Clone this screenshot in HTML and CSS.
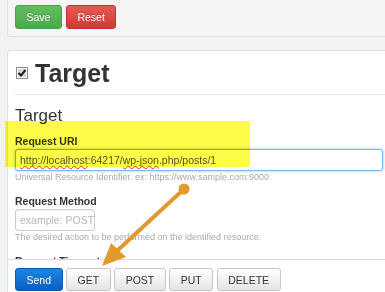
FILE: index.html
```html
<!DOCTYPE html>
<html lang="en">
<head>
  <meta charset="UTF-8" />
  <title>Target</title>
  <link rel="stylesheet" href="styles.css">
</head>
<body>
  <div class="toolbar">
    <button class="btn btn-save">Save</button>
    <button class="btn btn-reset">Reset</button>
  </div>

  <div class="panel">
    <div class="panel-body">
      <h1 class="title">
        <svg class="title-icon" width="12" height="12" viewBox="0 0 12 12">
          <rect x="0.5" y="0.5" width="11" height="11" fill="#fff" stroke="#8a8a8a"/>
          <rect x="2" y="2" width="8" height="8" fill="#d6d6d6"/>
          <path d="M2.5 6 L5 8.5 L9.5 3" fill="none" stroke="#1e1e1e" stroke-width="2"/>
        </svg>Target
      </h1>
      <h2 class="section">Target</h2>

      <div class="field">
        <label>Request URI</label>
        <div class="input input-uri"><span class="typo">http://localhost</span>:64217/<span class="typo">wp-json</span>.php/posts/1</div>
        <p class="help">Universal Resource Identifier. ex: https://www.sample.com:9000</p>
      </div>

      <div class="field">
        <label>Request Method</label>
        <div class="input input-method">example: POST</div>
        <p class="help">The desired action to be performed on the identified resource.</p>
      </div>

      <div class="field">
        <label>Request Timeout</label>
      </div>
    </div>

    <div class="footer">
      <button class="btn btn-send">Send</button>
      <button class="btn btn-default">GET</button>
      <button class="btn btn-default">POST</button>
      <button class="btn btn-default">PUT</button>
      <button class="btn btn-default">DELETE</button>
    </div>
  </div>

  <div class="marker"></div>
  <svg class="arrow" width="385" height="292" viewBox="0 0 385 292">
    <line x1="184" y1="189" x2="118" y2="250" stroke="#e29a2c" stroke-width="4" stroke-linecap="round"/>
    <circle cx="184" cy="189" r="5.5" fill="#e29a2c"/>
    <polygon points="102,266 126,257 111,243" fill="#e29a2c"/>
  </svg>
</body>
</html>
```

FILE: styles.css
```css
* {
  box-sizing: border-box;
}

body {
  margin: 0;
  height: 292px;
  overflow: hidden;
  position: relative;
  background: #f1f2f2;
  font-family: "Liberation Sans", Arial, sans-serif;
  color: #333;
}

.toolbar {
  height: 37px;
  margin-left: 7px;
  padding: 5px 7px;
  display: flex;
  gap: 4px;
  background: #f5f5f5;
  border-left: 1px solid #e3e3e3;
  border-bottom: 1px solid #e1e1e1;
  border-radius: 0 0 0 4px;
}

.btn {
  height: 24px;
  padding: 0 10.5px;
  font-family: "Liberation Sans", Arial, sans-serif;
  font-size: 10.5px;
  border: 1px solid;
  border-radius: 3px;
  cursor: pointer;
}

.btn-save {
  color: #fff;
  background: linear-gradient(#62bd62, #4ca94c);
  border-color: #46a346;
  text-shadow: 0 -1px 0 rgba(0,0,0,0.2);
}

.btn-reset {
  color: #fff;
  background: linear-gradient(#e55b57, #cc3a36);
  border-color: #c2332f;
  text-shadow: 0 -1px 0 rgba(0,0,0,0.2);
}

.panel {
  margin: 13px 0 0 7px;
  background: #fff;
  border: 1px solid #e3e3e3;
  border-right: 0;
  border-radius: 4px 0 0 0;
}

.panel-body {
  height: 208px;
  overflow: hidden;
  padding: 7px 0 0 7px;
}

.title {
  margin: 0;
  padding-bottom: 6px;
  font-size: 25px;
  line-height: 30px;
  font-weight: bold;
  border-bottom: 1px solid #e6e6e6;
}

.title-icon {
  vertical-align: 3px;
  margin: 0 7px 0 1px;
}

.section {
  margin: 11px 0 7.5px;
  font-size: 17px;
  line-height: 20px;
  font-weight: normal;
}

.field {
  margin-bottom: 10.5px;
}

.field label {
  display: block;
  margin-bottom: 1.5px;
  font-size: 10.5px;
  line-height: 14px;
  font-weight: bold;
}

.input {
  height: 22px;
  padding: 0 4px;
  font-size: 10.5px;
  line-height: 20px;
  color: #555;
  background: #fff;
  border: 1px solid #ccc;
  border-radius: 3px;
  white-space: nowrap;
  overflow: hidden;
}

.input-uri {
  width: 368px;
  border-color: #7db9ec;
  box-shadow: 0 0 3px rgba(102,175,233,0.75);
}

.input-method {
  width: 80px;
  color: #b8b8b8;
  box-shadow: inset 0 1px 1px rgba(0,0,0,0.07);
}

.typo {
  text-decoration: underline wavy #e0332f;
  text-decoration-thickness: 1px;
  text-decoration-skip-ink: none;
}

.help {
  margin: 0;
  font-size: 9px;
  line-height: 12px;
  color: #aaa;
}

.footer {
  display: flex;
  gap: 3.5px;
  padding: 8px 7px;
  border-top: 1px solid #dcdcdc;
}

.footer .btn {
  height: 23px;
}

.btn-send {
  color: #fff;
  background: linear-gradient(#1a86e2, #0a5ec4);
  border-color: #0a58b5;
}

.btn-default {
  color: #333;
  background: linear-gradient(#fff, #e4e4e4);
  border-color: #c6c6c6;
}

.marker {
  position: absolute;
  left: 5px;
  top: 121px;
  width: 245px;
  height: 46px;
  background: #fdfc48;
  mix-blend-mode: multiply;
}

.arrow {
  position: absolute;
  left: 0;
  top: 0;
  pointer-events: none;
}
```
